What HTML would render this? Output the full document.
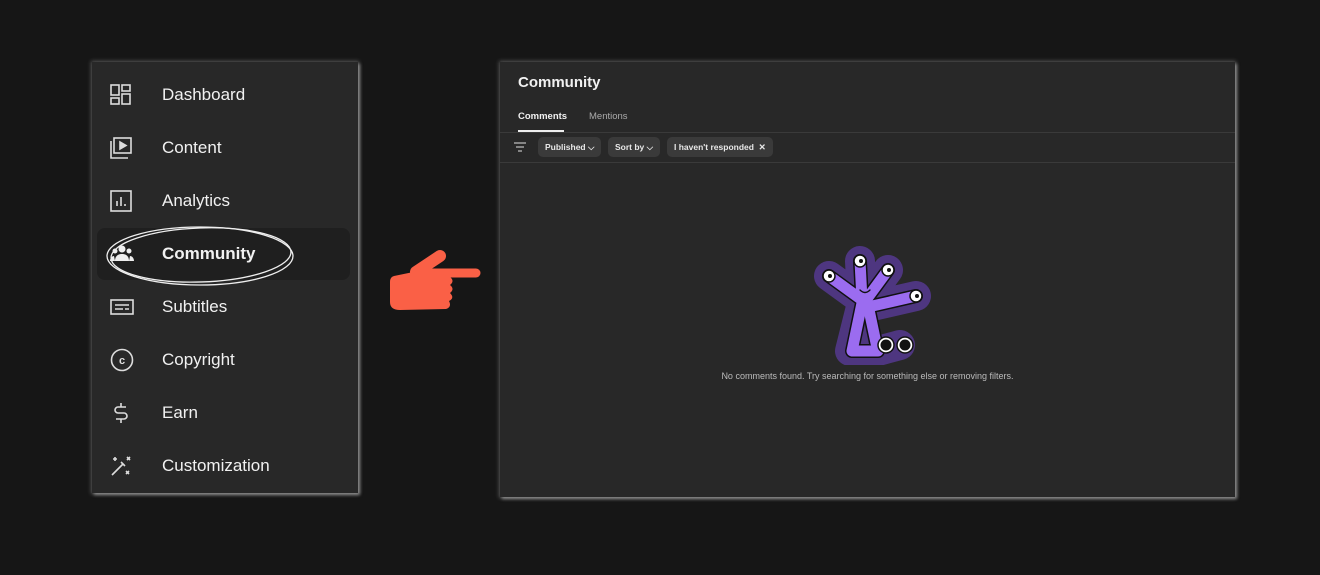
<!DOCTYPE html>
<html><head><style>
body{margin:0;width:1320px;height:575px;background:#161616;font-family:"Liberation Sans",sans-serif;position:relative;overflow:hidden}
.left{position:absolute;left:92px;top:62px;width:266px;height:431px;background:#282828;box-shadow:0 0 4px 1px rgba(200,200,200,.35),2px 2px 3px rgba(220,220,220,.5)}
.item{position:absolute;left:0;width:266px;height:52px;color:#f1f1f1;font-size:17px}
.item span{position:absolute;left:70px;top:50%;transform:translateY(-50%)}
.item svg{position:absolute;left:18px;top:50%;transform:translateY(-50%)}
.sel{position:absolute;left:5px;top:166px;width:253px;height:52px;background:#1f1f1f;border-radius:8px}
.right{position:absolute;left:500px;top:62px;width:735px;height:435px;background:#282828;box-shadow:0 0 4px 1px rgba(200,200,200,.35),2px 2px 3px rgba(220,220,220,.5)}
.chip{position:absolute;top:75px;height:20px;background:#3a3a3a;border-radius:5px;color:#e8e8e8;font-size:8.5px;font-weight:bold;line-height:20px;padding:0 7px}
</style></head><body>
<div class="left">
<div class="sel"></div>
<div class="item" style="top:7px"><svg width="22" height="22" viewBox="0 0 22 22" fill="none" stroke="#ddd" stroke-width="1.6"><rect x="1" y="1" width="8" height="10"/><rect x="1" y="14" width="8" height="6"/><rect x="12" y="1" width="8" height="6"/><rect x="12" y="10" width="8" height="10"/></svg><span>Dashboard</span></div>
<div class="item" style="top:60px"><svg width="22" height="22" viewBox="0 0 22 22" fill="none" stroke="#ddd" stroke-width="1.6"><rect x="4" y="1" width="17" height="15"/><path d="M1 4v17h17"/><path d="M10 5v7l6-3.5z" fill="#ddd"/></svg><span>Content</span></div>
<div class="item" style="top:113px"><svg width="22" height="22" viewBox="0 0 22 22" fill="none" stroke="#ddd" stroke-width="1.6"><rect x="1" y="1" width="20" height="20"/><path d="M7 16v-5M11 16V7M15 16v-2"/></svg><span>Analytics</span></div>
<div class="item" style="top:166px"><svg width="24" height="22" viewBox="0 0 24 22" fill="#eee"><circle cx="12" cy="6" r="3.5"/><circle cx="5" cy="8" r="2.5"/><circle cx="19" cy="8" r="2.5"/><path d="M5 18c0-5 3-7 7-7s7 2 7 7z"/><path d="M0 18c0-3 2-5 4-5l1 5zM24 18c0-3-2-5-4-5l-1 5z"/></svg><span style="font-weight:bold">Community</span></div>
<div class="item" style="top:219px"><svg width="24" height="22" viewBox="0 0 24 22" fill="none" stroke="#ddd" stroke-width="1.6"><rect x="1" y="4" width="22" height="14"/><path d="M5 9h14M5 13h8M15 13h4"/></svg><span>Subtitles</span></div>
<div class="item" style="top:272px"><svg width="24" height="24" viewBox="0 0 24 24" fill="none" stroke="#ddd" stroke-width="1.6"><circle cx="12" cy="12" r="10.5"/><text x="12" y="16" font-size="11" font-weight="bold" fill="#ddd" stroke="none" text-anchor="middle" font-family="Liberation Sans">c</text></svg><span>Copyright</span></div>
<div class="item" style="top:325px"><svg width="22" height="24" viewBox="0 0 22 24" fill="none" stroke="#ddd" stroke-width="1.6"><path d="M16 6H8a3 3 0 0 0 0 6h6a3 3 0 0 1 0 6H6M11 2v4M11 18v4"/></svg><span>Earn</span></div>
<div class="item" style="top:378px"><svg width="22" height="22" viewBox="0 0 22 22" fill="none" stroke="#ddd" stroke-width="1.6"><path d="M2 20L13 9M11 7l4 4"/><path d="M5 2v4M3 4h4M17 2l3 3M20 2l-3 3M16 16l3 3M19 16l-3 3"/></svg><span>Customization</span></div>
</div>
<svg style="position:absolute;left:100px;top:220px" width="200" height="70" viewBox="0 0 200 70" fill="none" stroke="#eee" stroke-width="1.3"><ellipse cx="100" cy="36" rx="93" ry="29"/><ellipse cx="101" cy="35" rx="90" ry="27" transform="rotate(-2 100 35)"/></svg>
<svg style="position:absolute;left:380px;top:240px" width="110" height="80" viewBox="0 0 110 80" fill="#fa6046">
<path d="M36 32L60 16" stroke="#fa6046" stroke-width="12" stroke-linecap="round"/>
<path d="M42 33L96 33" stroke="#fa6046" stroke-width="9" stroke-linecap="round"/>
<path d="M14 36L48 29L70 37Q75 41 70 45Q75 49 70 53Q75 58 69 61Q72 67 66 69L20 70Q10 70 10 62V42Q10 37 14 36Z"/>
</svg>
<div class="right">
<div style="position:absolute;left:18px;top:12px;color:#f1f1f1;font-size:15px;font-weight:bold">Community</div>
<div style="position:absolute;left:18px;top:49px;color:#f1f1f1;font-size:9.5px;font-weight:bold">Comments</div>
<div style="position:absolute;left:18px;top:68px;width:46px;height:2px;background:#eee"></div>
<div style="position:absolute;left:89px;top:49px;color:#aaa;font-size:9.5px">Mentions</div>
<div style="position:absolute;left:0;top:70px;width:735px;height:1px;background:#3a3a3a"></div>
<svg style="position:absolute;left:14px;top:80px" width="12" height="10" viewBox="0 0 12 10" stroke="#bbb" stroke-width="1.2"><path d="M0 1h12M2 5h8M4 9h4"/></svg>
<div class="chip" style="left:38px">Published ⌵</div>
<div class="chip" style="left:108px">Sort by ⌵</div>
<div class="chip" style="left:167px">I haven't responded &nbsp;✕</div>
<div style="position:absolute;left:0;top:100px;width:735px;height:1px;background:#3a3a3a"></div>
</div>
<svg style="position:absolute;left:800px;top:245px" width="140" height="120" viewBox="0 0 140 120" stroke-linecap="round" stroke-linejoin="round" fill="none">
<g stroke="#4e3680" stroke-width="30">
<path d="M29 31L62 55L60 16M66 55L88 25M68 62L116 51M62 58L50 106L78 106L100 100"/>
</g>
<g stroke="#111" stroke-width="14">
<path d="M29 31L62 55L60 16M66 55L88 25M68 62L116 51M62 58L52 106L78 106"/>
<path d="M68 60L76 98"/>
</g>
<g stroke="#9b6cf0" stroke-width="11">
<path d="M29 31L62 55L60 16M66 55L88 25M68 62L116 51M62 58L52 106L78 106"/>
<path d="M68 60L76 98"/>
</g>
<path d="M60 45q5 5 10 0" stroke="#111" stroke-width="1.3"/>
<g stroke="#111" stroke-width="1.5" fill="#fff"><circle cx="29" cy="31" r="6"/><circle cx="60" cy="16" r="6"/><circle cx="88" cy="25" r="6"/><circle cx="116" cy="51" r="6"/><circle cx="86" cy="100" r="8"/><circle cx="105" cy="100" r="8"/></g>
<g fill="#111"><circle cx="30" cy="31" r="2"/><circle cx="61" cy="16" r="2"/><circle cx="89" cy="25" r="2"/><circle cx="117" cy="51" r="2"/><circle cx="86" cy="100" r="5.5"/><circle cx="105" cy="100" r="5.5"/></g>
</svg>
<div style="position:absolute;left:500px;width:735px;top:371px;text-align:center;color:#bbb;font-size:9px">No comments found. Try searching for something else or removing filters.</div>
</body></html>
